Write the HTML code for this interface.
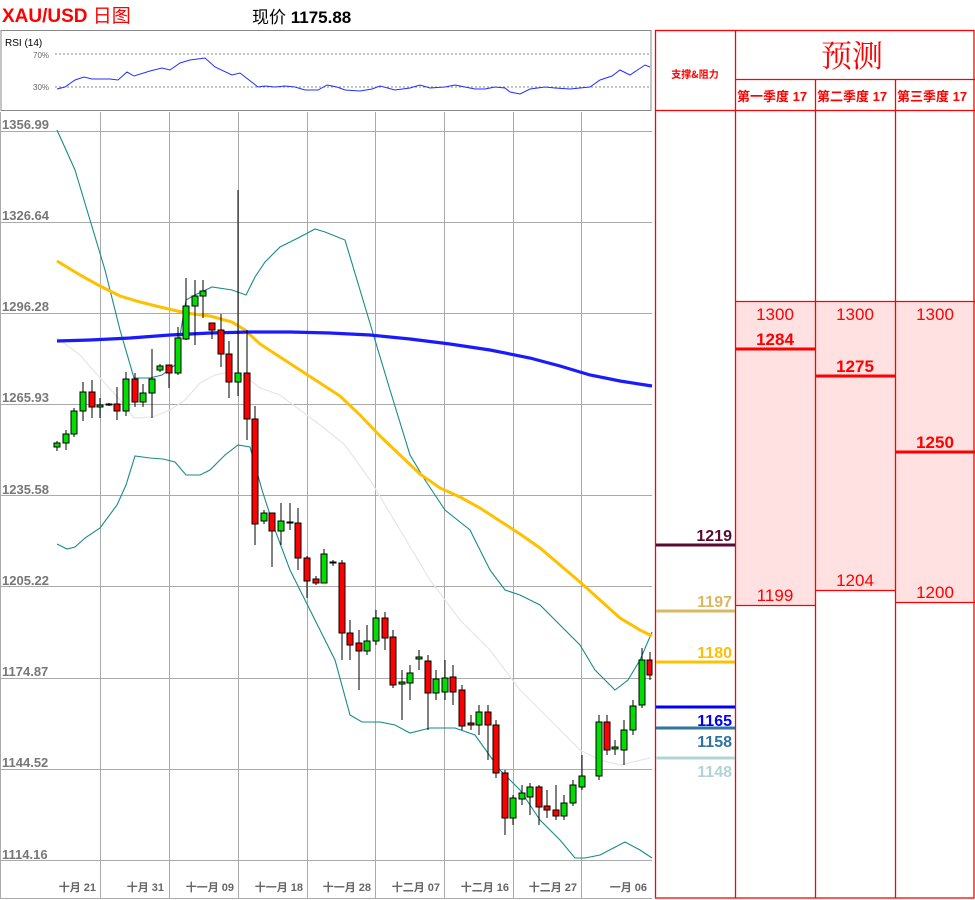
<!DOCTYPE html>
<html><head><meta charset="utf-8"><style>
body{margin:0;width:975px;height:900px;background:#fff;overflow:hidden;position:relative;font-family:"Liberation Sans","Noto Sans CJK SC",sans-serif}
.a{position:absolute}
</style></head><body>
<div class="a" style="left:2px;top:1px;color:#f00;font-weight:bold;font-size:19px;font-family:'Liberation Sans Narrow','Liberation Sans','Noto Sans CJK SC',sans-serif">XAU/USD <span style="font-weight:normal">日图</span></div>
<div class="a" style="left:252px;top:3px;font-size:17px;color:#000">现价 <b>1175.88</b></div>
<svg class="a" style="left:0;top:0" width="975" height="900" xmlns="http://www.w3.org/2000/svg">
<!-- RSI panel -->
<rect x="1" y="30.5" width="650" height="80" fill="#fff" stroke="#888" stroke-width="1"/>
<text x="5" y="46" font-size="10" font-family="Liberation Sans" fill="#000">RSI (14)</text>
<line x1="55" y1="54" x2="650" y2="54" stroke="#888" stroke-dasharray="2,2"/>
<line x1="55" y1="87" x2="650" y2="87" stroke="#888" stroke-dasharray="2,2"/>
<text x="33" y="58" font-size="8" fill="#666" font-family="Liberation Sans">70%</text>
<text x="33" y="90" font-size="8" fill="#666" font-family="Liberation Sans">30%</text>
<polyline fill="none" stroke="#2030ff" stroke-width="1" points="57,89 65,87 75,80 84,77 92,79 110,79 118,80 127,72 134,76 150,71 162,68 170,70 180,63 190,60 205,58 215,67 232,75 240,73 258,87 265,86 275,87 285,86 295,87 305,90 318,90 327,85 337,87 345,90 360,91 372,89 380,86 395,90 410,88 420,85 430,88 445,87 455,85 465,87 475,89 485,89 495,87 505,88 510,92 520,94 530,89 545,87 555,88 570,89 580,88 590,87 600,80 612,76 620,70 630,75 645,65 650,67"/>
<!-- main chart grid -->
<line x1="0.5" y1="112" x2="0.5" y2="898" stroke="#aaa"/>
<g stroke="#aaa" stroke-width="1">
<line x1="0" y1="131.5" x2="652" y2="131.5"/>
<line x1="0" y1="222.5" x2="652" y2="222.5"/>
<line x1="0" y1="313.5" x2="652" y2="313.5"/>
<line x1="0" y1="404.5" x2="652" y2="404.5"/>
<line x1="0" y1="495.5" x2="652" y2="495.5"/>
<line x1="0" y1="586.5" x2="652" y2="586.5"/>
<line x1="0" y1="678.5" x2="652" y2="678.5"/>
<line x1="0" y1="769.5" x2="652" y2="769.5"/>
<line x1="0" y1="860.5" x2="652" y2="860.5"/>
<line x1="0" y1="898.5" x2="652" y2="898.5"/>
<line x1="100.5" y1="112" x2="100.5" y2="898"/>
<line x1="169.5" y1="112" x2="169.5" y2="898"/>
<line x1="238.5" y1="112" x2="238.5" y2="898"/>
<line x1="307.5" y1="112" x2="307.5" y2="898"/>
<line x1="375.5" y1="112" x2="375.5" y2="898"/>
<line x1="444.5" y1="112" x2="444.5" y2="898"/>
<line x1="513.5" y1="112" x2="513.5" y2="898"/>
<line x1="581.5" y1="112" x2="581.5" y2="898"/>
</g>
<g font-size="13" font-weight="bold" fill="#777" font-family="Liberation Sans Narrow,Liberation Sans,sans-serif">
<text x="2" y="129">1356.99</text><text x="2" y="220">1326.64</text><text x="2" y="311">1296.28</text><text x="2" y="402">1265.93</text><text x="2" y="494">1235.58</text><text x="2" y="585">1205.22</text><text x="2" y="676">1174.87</text><text x="2" y="767">1144.52</text><text x="2" y="859">1114.16</text>
</g>
<g font-size="11" font-weight="bold" fill="#666" text-anchor="end" font-family="Liberation Sans,Noto Sans CJK SC,sans-serif">
<text x="96" y="891">十月 21</text><text x="164" y="891">十月 31</text><text x="234" y="891">十一月 09</text><text x="303" y="891">十一月 18</text><text x="371" y="891">十一月 28</text><text x="440" y="891">十二月 07</text><text x="509" y="891">十二月 16</text><text x="577" y="891">十二月 27</text><text x="647" y="891">一月 06</text>
</g>
<!-- bands & MAs -->
<polyline fill="none" stroke="#e6e6e6" stroke-width="1.2" points="57,338 80,355 100,378 120,400 134,418 152,417 170,410 185,400 200,383 215,375 230,372 245,376 260,388 280,395 300,410 320,425 345,445 370,480 400,530 430,580 460,620 490,650 520,690 550,720 580,750 600,760 620,765 650,758"/>
<polyline fill="none" stroke="#1a8a8a" stroke-width="1.1" points="57,130 75,170 90,220 105,270 120,330 134,378 150,378 162,375 175,365 186,300 195,295 212,287 232,290 246,295 255,277 265,262 280,247 300,237 315,229 325,232 345,240 360,290 375,340 390,390 410,455 425,480 445,510 470,530 490,570 505,590 520,595 540,605 560,625 580,645 595,670 615,690 628,680 640,660 652,632"/>
<polyline fill="none" stroke="#1a8a8a" stroke-width="1.1" points="57,544 67,549 75,547 85,538 100,528 117,505 126,485 135,456 150,458 163,459 175,462 186,475 200,475 210,470 225,455 238,445 250,447 262,490 275,530 290,570 305,600 320,630 335,660 350,715 362,722 380,722 395,725 410,733 430,728 455,728 475,735 500,770 520,790 540,820 560,840 575,858 585,858 600,855 625,842 640,850 652,858"/>
<polyline fill="none" stroke="#ffc000" stroke-width="3" points="57,261 80,275 100,286 120,296 140,302 160,307 186,313 210,316 232,322 245,330 260,344 280,357 300,370 320,383 340,396 360,415 380,436 400,455 420,474 440,488 460,497 480,508 500,521 520,534 540,548 560,565 580,582 600,600 620,618 640,630 652,636"/>
<polyline fill="none" stroke="#1a1aff" stroke-width="3.2" points="57,341 90,340 130,338 170,335 210,333 250,332 290,332 330,333 370,335 410,339 450,344 490,350 530,358 560,366 590,375 620,381 652,386"/>
<!-- candles -->
<g stroke="#000" stroke-width="1">
<line x1="57" y1="441" x2="57" y2="451"/><rect x="54" y="443" width="6" height="4" fill="#0d0"/>
<line x1="66" y1="430" x2="66" y2="450"/><rect x="63" y="434" width="6" height="9" fill="#0d0"/>
<line x1="74" y1="408" x2="74" y2="437"/><rect x="71" y="411" width="6" height="23" fill="#0d0"/>
<line x1="83" y1="382" x2="83" y2="421"/><rect x="80" y="392" width="6" height="19" fill="#0d0"/>
<line x1="92" y1="380" x2="92" y2="418"/><rect x="89" y="392" width="6" height="15" fill="#f00"/>
<line x1="100" y1="398" x2="100" y2="418"/><rect x="97" y="405" width="6" height="2" fill="#0d0"/>
<line x1="109" y1="403" x2="109" y2="406"/><rect x="106" y="404" width="6" height="1" fill="#0d0"/>
<line x1="117" y1="387" x2="117" y2="420"/><rect x="114" y="404" width="6" height="7" fill="#f00"/>
<line x1="126" y1="372" x2="126" y2="416"/><rect x="123" y="379" width="6" height="32" fill="#0d0"/>
<line x1="135" y1="373" x2="135" y2="407"/><rect x="132" y="379" width="6" height="23" fill="#f00"/>
<line x1="143" y1="384" x2="143" y2="407"/><rect x="140" y="393" width="6" height="9" fill="#0d0"/>
<line x1="152" y1="349" x2="152" y2="418"/><rect x="149" y="379" width="6" height="14" fill="#0d0"/>
<line x1="160" y1="364" x2="160" y2="372"/><rect x="157" y="366" width="6" height="4" fill="#0d0"/>
<line x1="169" y1="365" x2="169" y2="388"/><rect x="166" y="365" width="6" height="8" fill="#f00"/>
<line x1="178" y1="327" x2="178" y2="375"/><rect x="175" y="338" width="6" height="35" fill="#0d0"/>
<line x1="186" y1="278" x2="186" y2="340"/><rect x="183" y="306" width="6" height="33" fill="#0d0"/>
<line x1="195" y1="280" x2="195" y2="345"/><rect x="192" y="296" width="6" height="10" fill="#0d0"/>
<line x1="203" y1="280" x2="203" y2="318"/><rect x="200" y="291" width="6" height="5" fill="#0d0"/>
<line x1="212" y1="323" x2="212" y2="339"/><rect x="209" y="323" width="6" height="7" fill="#f00"/>
<line x1="221" y1="314" x2="221" y2="367"/><rect x="218" y="330" width="6" height="24" fill="#f00"/>
<line x1="229" y1="341" x2="229" y2="398"/><rect x="226" y="354" width="6" height="28" fill="#f00"/>
<line x1="238" y1="190" x2="238" y2="396"/><rect x="235" y="373" width="6" height="9" fill="#0d0"/>
<line x1="247" y1="330" x2="247" y2="440"/><rect x="244" y="373" width="6" height="46" fill="#f00"/>
<line x1="255" y1="406" x2="255" y2="545"/><rect x="252" y="419" width="6" height="105" fill="#f00"/>
<line x1="264" y1="510" x2="264" y2="524"/><rect x="261" y="513" width="6" height="8" fill="#0d0"/>
<line x1="272" y1="513" x2="272" y2="567"/><rect x="269" y="513" width="6" height="18" fill="#f00"/>
<line x1="281" y1="503" x2="281" y2="545"/><rect x="278" y="521" width="6" height="10" fill="#0d0"/>
<line x1="290" y1="503" x2="290" y2="530"/><rect x="287" y="522" width="6" height="1" fill="#0d0"/>
<line x1="298" y1="508" x2="298" y2="570"/><rect x="295" y="523" width="6" height="35" fill="#f00"/>
<line x1="307" y1="556" x2="307" y2="598"/><rect x="304" y="558" width="6" height="23" fill="#f00"/>
<line x1="316" y1="576" x2="316" y2="585"/><rect x="313" y="579" width="6" height="4" fill="#f00"/>
<line x1="324" y1="549" x2="324" y2="583"/><rect x="321" y="554" width="6" height="29" fill="#0d0"/>
<line x1="333" y1="560" x2="333" y2="566"/><rect x="330" y="562" width="6" height="1" fill="#f00"/>
<line x1="342" y1="560" x2="342" y2="660"/><rect x="339" y="563" width="6" height="70" fill="#f00"/>
<line x1="350" y1="620" x2="350" y2="660"/><rect x="347" y="633" width="6" height="12" fill="#f00"/>
<line x1="359" y1="630" x2="359" y2="690"/><rect x="356" y="643" width="6" height="8" fill="#f00"/>
<line x1="367" y1="625" x2="367" y2="655"/><rect x="364" y="641" width="6" height="10" fill="#0d0"/>
<line x1="376" y1="610" x2="376" y2="645"/><rect x="373" y="618" width="6" height="23" fill="#0d0"/>
<line x1="385" y1="612" x2="385" y2="650"/><rect x="382" y="618" width="6" height="20" fill="#f00"/>
<line x1="393" y1="630" x2="393" y2="688"/><rect x="390" y="637" width="6" height="48" fill="#f00"/>
<line x1="402" y1="670" x2="402" y2="720"/><rect x="399" y="682" width="6" height="2" fill="#0d0"/>
<line x1="410" y1="665" x2="410" y2="700"/><rect x="407" y="673" width="6" height="10" fill="#0d0"/>
<line x1="419" y1="650" x2="419" y2="670"/><rect x="416" y="657" width="6" height="2" fill="#0d0"/>
<line x1="428" y1="655" x2="428" y2="730"/><rect x="425" y="661" width="6" height="32" fill="#f00"/>
<line x1="436" y1="670" x2="436" y2="700"/><rect x="433" y="679" width="6" height="14" fill="#0d0"/>
<line x1="445" y1="660" x2="445" y2="700"/><rect x="442" y="678" width="6" height="14" fill="#0d0"/>
<line x1="453" y1="665" x2="453" y2="705"/><rect x="450" y="677" width="6" height="15" fill="#f00"/>
<line x1="462" y1="685" x2="462" y2="730"/><rect x="459" y="690" width="6" height="36" fill="#f00"/>
<line x1="471" y1="715" x2="471" y2="730"/><rect x="468" y="723" width="6" height="2" fill="#f00"/>
<line x1="479" y1="705" x2="479" y2="735"/><rect x="476" y="712" width="6" height="13" fill="#0d0"/>
<line x1="488" y1="705" x2="488" y2="760"/><rect x="485" y="712" width="6" height="13" fill="#f00"/>
<line x1="496" y1="720" x2="496" y2="778"/><rect x="493" y="725" width="6" height="48" fill="#f00"/>
<line x1="505" y1="770" x2="505" y2="835"/><rect x="502" y="773" width="6" height="45" fill="#f00"/>
<line x1="513" y1="795" x2="513" y2="825"/><rect x="510" y="798" width="6" height="20" fill="#0d0"/>
<line x1="522" y1="785" x2="522" y2="805"/><rect x="519" y="793" width="6" height="6" fill="#0d0"/>
<line x1="530" y1="783" x2="530" y2="815"/><rect x="527" y="787" width="6" height="10" fill="#0d0"/>
<line x1="539" y1="785" x2="539" y2="825"/><rect x="536" y="787" width="6" height="20" fill="#f00"/>
<line x1="547" y1="790" x2="547" y2="818"/><rect x="544" y="806" width="6" height="4" fill="#f00"/>
<line x1="556" y1="785" x2="556" y2="820"/><rect x="553" y="810" width="6" height="6" fill="#f00"/>
<line x1="564" y1="795" x2="564" y2="820"/><rect x="561" y="803" width="6" height="13" fill="#0d0"/>
<line x1="573" y1="780" x2="573" y2="806"/><rect x="570" y="785" width="6" height="18" fill="#0d0"/>
<line x1="582" y1="755" x2="582" y2="790"/><rect x="579" y="776" width="6" height="11" fill="#0d0"/>
<line x1="599" y1="715" x2="599" y2="780"/><rect x="596" y="722" width="6" height="54" fill="#0d0"/>
<line x1="607" y1="715" x2="607" y2="755"/><rect x="604" y="722" width="6" height="28" fill="#f00"/>
<line x1="615" y1="740" x2="615" y2="755"/><rect x="612" y="747" width="6" height="2" fill="#0d0"/>
<line x1="624" y1="720" x2="624" y2="765"/><rect x="621" y="730" width="6" height="20" fill="#0d0"/>
<line x1="633" y1="700" x2="633" y2="735"/><rect x="630" y="706" width="6" height="24" fill="#0d0"/>
<line x1="642" y1="648" x2="642" y2="708"/><rect x="639" y="660" width="6" height="45" fill="#0d0"/>
<line x1="650" y1="652" x2="650" y2="680"/><rect x="647" y="660" width="5" height="15" fill="#f00"/>
</g>
<!-- right table -->
<rect x="735" y="301" width="80" height="304" fill="#ffe1e1"/>
<rect x="815" y="301" width="80" height="289" fill="#ffe1e1"/>
<rect x="895" y="301" width="80" height="301" fill="#ffe1e1"/>
<g stroke="#f00" stroke-width="1.3" fill="none">
<rect x="655.5" y="30.5" width="318.5" height="867.5"/>
<line x1="735.5" y1="30" x2="735.5" y2="898"/>
<line x1="815.5" y1="79" x2="815.5" y2="898"/>
<line x1="895.5" y1="79" x2="895.5" y2="898"/>
<line x1="735" y1="79.5" x2="975" y2="79.5"/>
<line x1="655" y1="110.5" x2="975" y2="110.5"/>
<line x1="735" y1="301.5" x2="975" y2="301.5"/>
<line x1="735" y1="605.5" x2="815" y2="605.5"/>
<line x1="815" y1="590.5" x2="895" y2="590.5"/>
<line x1="895" y1="602.5" x2="975" y2="602.5"/>
</g>
<g stroke="#f00" stroke-width="3">
<line x1="735" y1="349" x2="815" y2="349"/>
<line x1="815" y1="376" x2="895" y2="376"/>
<line x1="895" y1="452" x2="975" y2="452"/>
</g>
<line x1="656" y1="545" x2="735" y2="545" stroke="#5a0a30" stroke-width="3"/>
<line x1="656" y1="611" x2="735" y2="611" stroke="#d9b860" stroke-width="3"/>
<line x1="656" y1="662" x2="735" y2="662" stroke="#ffc000" stroke-width="3"/>
<line x1="656" y1="707" x2="735" y2="707" stroke="#0000ff" stroke-width="3"/>
<line x1="656" y1="728" x2="735" y2="728" stroke="#31749f" stroke-width="3"/>
<line x1="656" y1="758" x2="735" y2="758" stroke="#b0d4d4" stroke-width="3"/>
<g font-family="Liberation Sans,Noto Sans CJK SC,sans-serif" font-weight="bold" font-size="16" text-anchor="end">
<text x="732" y="541" fill="#5a0a30">1219</text>
<text x="732" y="607" fill="#d9b860">1197</text>
<text x="732" y="658" fill="#ffc000">1180</text>
<text x="732" y="726" fill="#0000ff">1165</text>
<text x="732" y="747" fill="#31749f">1158</text>
<text x="732" y="777" fill="#b0d4d4">1148</text>
</g>
<text x="695" y="78" font-size="10" font-weight="bold" fill="#f00" text-anchor="middle" font-family="Noto Sans CJK SC,sans-serif">支撑&amp;阻力</text>
<text x="852" y="67" font-size="31" fill="#f00" text-anchor="middle" font-family="Noto Serif CJK SC,serif">预测</text>
<g font-size="13" font-weight="bold" fill="#f00" font-family="Liberation Sans,Noto Sans CJK SC,sans-serif">
<text x="737" y="101">第一季度 17</text><text x="817" y="101">第二季度 17</text><text x="897" y="101">第三季度 17</text>
</g>
<g font-size="17" fill="#f00" text-anchor="middle" font-family="Liberation Sans,sans-serif">
<text x="775" y="320">1300</text><text x="855" y="320">1300</text><text x="935" y="320">1300</text>
<text x="775" y="601">1199</text><text x="855" y="586">1204</text><text x="935" y="598">1200</text>
</g>
<g font-size="17" font-weight="bold" fill="#f00" text-anchor="middle" font-family="Liberation Sans,sans-serif">
<text x="775" y="345">1284</text><text x="855" y="372">1275</text><text x="935" y="448">1250</text>
</g>
</svg>
</body></html>
